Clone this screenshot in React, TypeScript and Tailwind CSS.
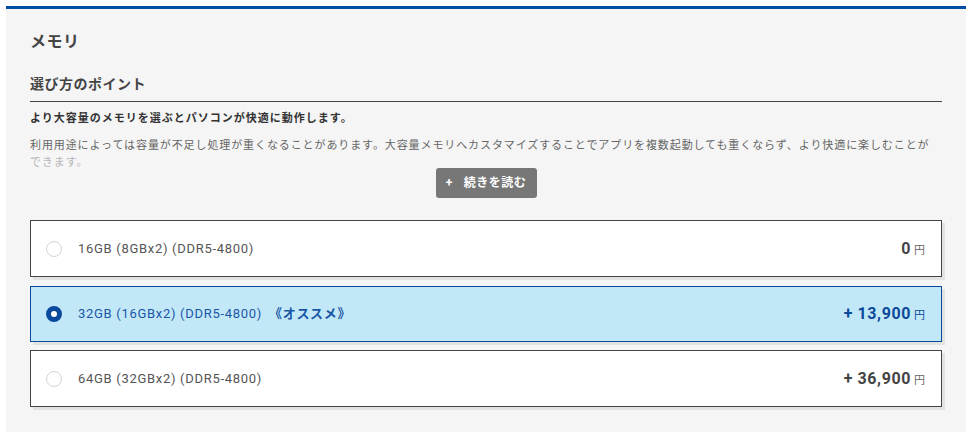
import React, { useState } from "react";

type MemoryOption = {
    id: string;
    label: string;
    badge?: string;
    price: number;
};

const OPTIONS: MemoryOption[] = [
    { id: "16", label: "16GB (8GBx2) (DDR5-4800)", price: 0 },
    { id: "32", label: "32GB (16GBx2) (DDR5-4800)", badge: "《オススメ》", price: 13900 },
    { id: "64", label: "64GB (32GBx2) (DDR5-4800)", price: 36900 },
];

const FONT = "font-[Roboto,'Noto_Sans_CJK_JP',sans-serif]";

function OptionCard({
    option,
    selected,
    onSelect,
}: {
    option: MemoryOption;
    selected: boolean;
    onSelect: () => void;
}) {
    const priceText = option.price === 0 ? "0" : `+ ${option.price.toLocaleString("en-US")}`;

    return (
        <button
            type="button"
            onClick={onSelect}
            className={
                selected
                    ? "flex h-[56px] w-full items-center border border-[#0a4a9c] bg-[#c2e8f8] pl-[15px] pr-[16px] text-left shadow-[3px_3px_0_#e2e2e2]"
                    : "flex h-[57px] w-full items-center border border-[#444] bg-white pl-[15px] pr-[16px] text-left shadow-[3px_3px_0_#e2e2e2]"
            }
        >
            {/* radio */}
            {selected ? (
                <span className="h-[16px] w-[16px] shrink-0 rounded-full border-[5px] border-[#0a4a9c] bg-white" />
            ) : (
                <span className="h-[16px] w-[16px] shrink-0 rounded-full border border-[#d4d4d4] bg-white" />
            )}

            <span
                className={
                    selected
                        ? "ml-[16px] flex-1 text-[13px] tracking-[0.7px] text-[#1a56a6]"
                        : "ml-[16px] flex-1 text-[13px] tracking-[0.7px] text-[#555]"
                }
            >
                {option.label}
                {option.badge && <span className="ml-[7px] font-bold">{option.badge}</span>}
            </span>

            <span className="flex items-baseline">
                <span
                    className={
                        selected
                            ? "text-[16px] font-bold tracking-[0.6px] text-[#0b4a9a]"
                            : "text-[16px] font-bold tracking-[0.6px] text-[#444]"
                    }
                >
                    {priceText}
                </span>
                <span className={selected ? "ml-[3px] text-[11px] text-[#0b4a9a]" : "ml-[3px] text-[11px] text-[#666]"}>
                    円
                </span>
            </span>
        </button>
    );
}

export default function App() {
    const [selected, setSelected] = useState("32");
    const [expanded, setExpanded] = useState(false);

    return (
        <div className={`${FONT} min-h-[438px] w-full bg-white pl-[6px] pr-[13px] pt-[6px] pb-[6px]`}>
            <section className="border-t-[3px] border-[#004ea2] bg-[#f5f5f5] px-[24px] pt-[21px] pb-[25px]">
                <h2 className="text-[16px] font-bold leading-[24px] tracking-[0.5px] text-[#444]">メモリ</h2>

                <div className="mt-[20px]">
                    <h3 className="border-b border-[#444] pb-[7px] text-[14px] font-bold leading-[20px] tracking-[0.5px] text-[#444]">
                        選び方のポイント
                    </h3>
                    <p className="mt-[8px] text-[11px] font-bold leading-[17px] tracking-[1px] text-[#333]">
                        より大容量のメモリを選ぶとパソコンが快適に動作します。
                    </p>

                    <div className={expanded ? "relative mt-[10px]" : "relative mt-[10px] h-[31px] overflow-hidden"}>
                        <p className="text-[11px] leading-[17px] tracking-[0.9px] text-[#666]">
                            利用用途によっては容量が不足し処理が重くなることがあります。大容量メモリへカスタマイズすることでアプリを複数起動しても重くならず、より快適に楽しむことが
                            <br />
                            できます。
                        </p>
                        {!expanded && (
                            <div className="absolute inset-x-0 bottom-0 h-[15px] bg-[#f5f5f5]/55" />
                        )}
                    </div>

                    <div className="flex justify-center">
                        <button
                            type="button"
                            onClick={() => setExpanded(!expanded)}
                            className="flex h-[30px] w-[101px] items-center justify-center gap-[11px] rounded-[3px] bg-[#777] text-[12px] font-bold tracking-[0.5px] text-white"
                        >
                            <span>{expanded ? "−" : "+"}</span>
                            <span>{expanded ? "閉じる" : "続きを読む"}</span>
                        </button>
                    </div>
                </div>

                <div className="mt-[22px] flex flex-col gap-[8px]">
                    {OPTIONS.map((option, i) => (
                        <div key={option.id} className={i === 0 ? "pb-[1px]" : ""}>
                            <OptionCard
                                option={option}
                                selected={option.id === selected}
                                onSelect={() => setSelected(option.id)}
                            />
                        </div>
                    ))}
                </div>
            </section>
        </div>
    );
}
